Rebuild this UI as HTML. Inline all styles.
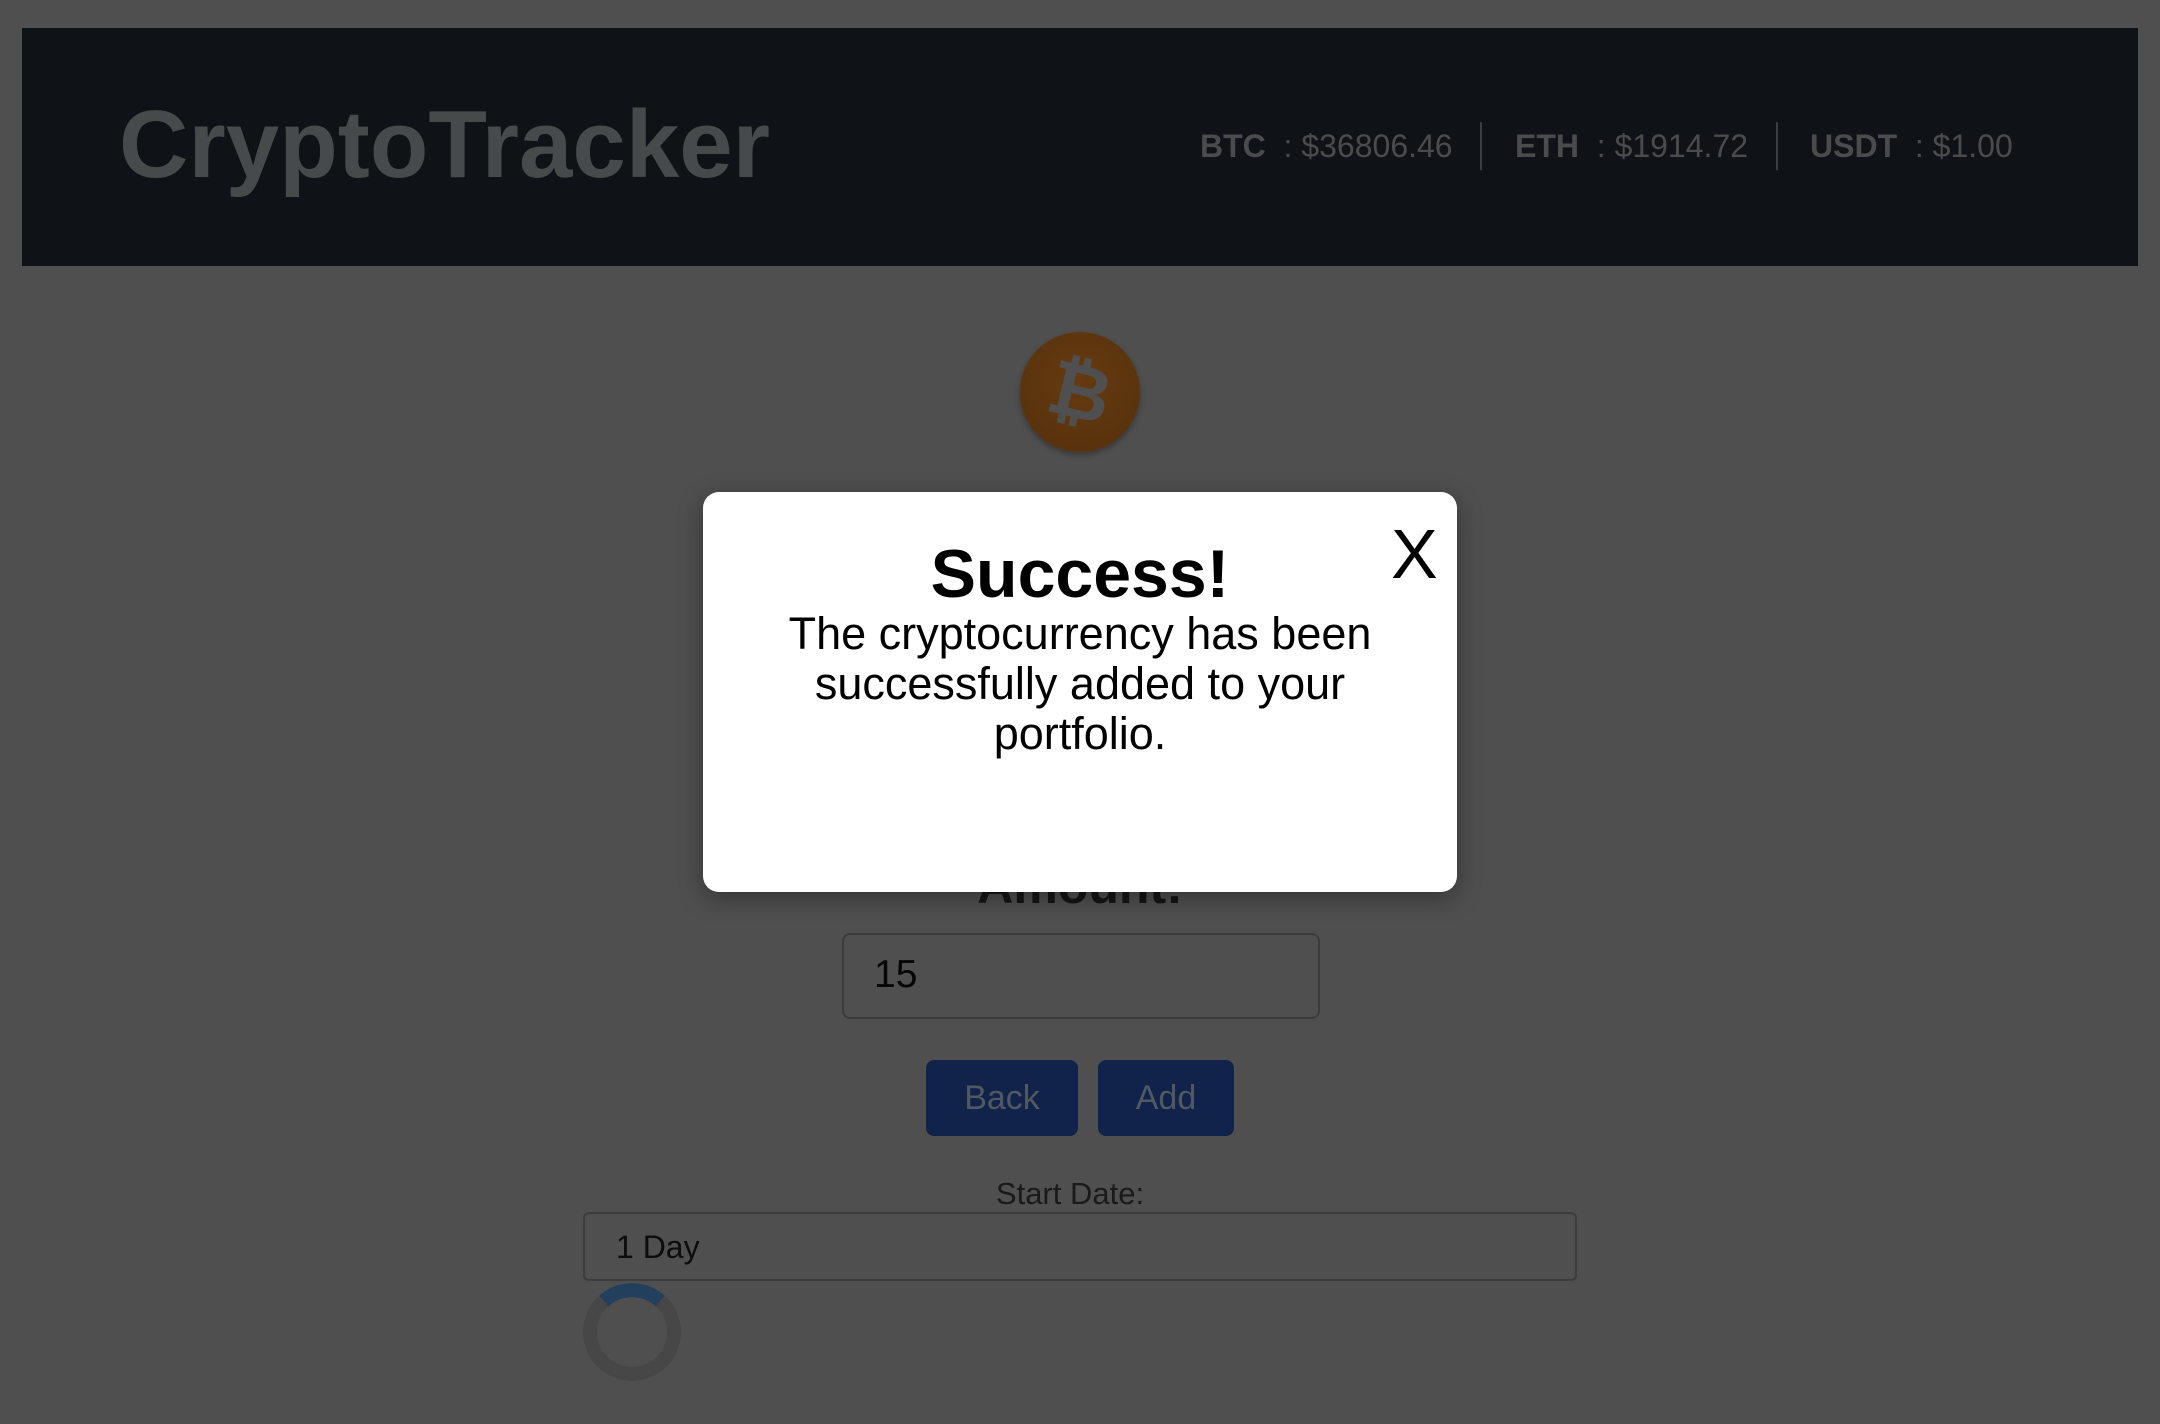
<!DOCTYPE html>
<html><head><meta charset="utf-8"><style>
*{margin:0;padding:0;box-sizing:border-box}
html,body{width:2160px;height:1424px;overflow:hidden;background:#4f4f4f;font-family:"Liberation Sans",Arial,sans-serif;position:relative}
.hdr{position:absolute;left:22px;top:28px;width:2116px;height:238px;background:#0f1217}
.title{position:absolute;left:119px;top:90px;font-size:96px;font-weight:bold;color:#474a4a;letter-spacing:0px;line-height:110px}
.prices{position:absolute;top:122px;height:48px;font-size:32px;color:#4a4b4d;line-height:48px}
.prices span{position:absolute;white-space:nowrap}
.sep{position:absolute;top:122px;width:2px;height:48px;background:#3a3d42}
.coin{position:absolute;left:1020px;top:332px;width:120px;height:120px;border-radius:50%;background:radial-gradient(circle at 50% 40%,#653a10,#55300c);box-shadow:0 3px 6px rgba(0,0,0,.3)}
.abs{position:absolute;white-space:nowrap}
.modal{position:absolute;left:703px;top:492px;width:754px;height:400px;background:#fff;border-radius:16px;box-shadow:0 6px 24px rgba(0,0,0,.35);text-align:center}
.input{position:absolute;left:842px;top:933px;width:478px;height:86px;border:2px solid #3c3c3c;border-radius:8px}
.btn{position:absolute;top:1060px;height:76px;background:#11234a;border-radius:8px;color:#505862;font-size:34px;line-height:76px;text-align:center}
.sel{position:absolute;left:583px;top:1212px;width:994px;height:69px;border:2px solid #3c3c3c;border-radius:6px}
</style></head><body>
<div class="hdr"></div>
<div class="title">CryptoTracker</div>
<div class="prices" style="left:0;width:2160px">
<span style="left:1200px"><b>BTC</b>&nbsp; : $36806.46</span>
<span style="left:1515px"><b>ETH</b>&nbsp; : $1914.72</span>
<span style="left:1810px"><b>USDT</b>&nbsp; : $1.00</span>
</div>
<div class="sep" style="left:1480px"></div>
<div class="sep" style="left:1776px"></div>
<div class="coin"><svg width="120" height="120" viewBox="0 0 120 120"><text x="60" y="86" text-anchor="middle" font-family="Liberation Sans" font-weight="bold" font-size="76" fill="#4f4f4f" transform="rotate(14 60 60)">₿</text></svg></div>
<div class="abs" style="left:0;width:2160px;text-align:center;top:856px;font-size:50px;font-weight:bold;color:#151515;line-height:60px">Amount:</div>
<div class="input"></div>
<div class="abs" style="left:874px;top:950px;font-size:39px;color:#050505;line-height:50px">15</div>
<div class="btn" style="left:926px;width:152px">Back</div>
<div class="btn" style="left:1098px;width:136px">Add</div>
<div class="abs" style="left:0;width:2140px;text-align:center;top:1174px;font-size:31px;color:#1a1a1a;line-height:40px">Start Date:</div>
<div class="sel"></div>
<div class="abs" style="left:616px;top:1227px;font-size:32px;color:#0c0c0c;line-height:40px">1 Day</div>
<svg class="abs" style="left:582px;top:1282px" width="100" height="100" viewBox="0 0 100 100"><circle cx="50" cy="50" r="42" fill="none" stroke="#474747" stroke-width="14"/><path d="M22 19 A42 42 0 0 1 78 19" fill="none" stroke="#22405e" stroke-width="14"/></svg>
<div class="modal">
<div class="abs" style="left:0;width:754px;top:42px;font-size:68px;font-weight:bold;color:#000;line-height:80px;text-align:center">Success!</div>
<div class="abs" style="left:0;width:754px;top:117px;font-size:45px;color:#000;line-height:50px;text-align:center;white-space:normal">The cryptocurrency has been<br>successfully added to your<br>portfolio.</div>
<div class="abs" style="left:688px;top:22px;font-size:70px;color:#000;line-height:80px">X</div>
</div>
</body></html>
